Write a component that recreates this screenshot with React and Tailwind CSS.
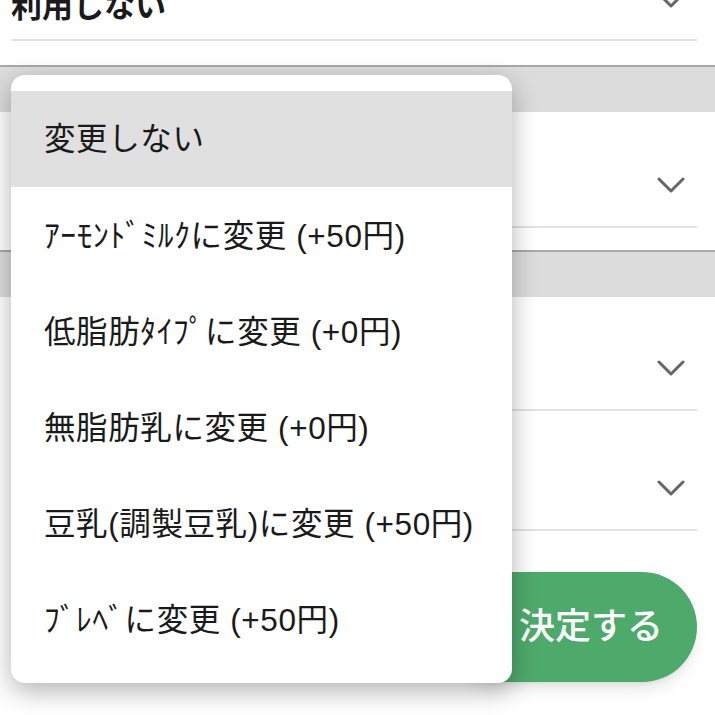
import React from 'react';

const FONT = { fontFamily: '"Liberation Sans", "Noto Sans CJK JP", sans-serif' };

function Chevron() {
  return (
    <svg width="28" height="16" viewBox="0 0 28 16" fill="none" stroke="#666666" strokeWidth="3" strokeLinecap="round" strokeLinejoin="round">
      <path d="M2 2l12 12 12-12" />
    </svg>
  );
}

// select row: line at the bottom, chevron sits low in the row
function SelectRow({ className = '' }) {
  return (
    <div className={`flex items-end justify-end border-b-2 border-[#e2e2e2] ${className}`}>
      <div className="mb-[33px] mr-[12px]">
        <Chevron />
      </div>
    </div>
  );
}

const options = [
  'ｱｰﾓﾝﾄﾞﾐﾙｸに変更 (+50円)',
  '低脂肪ﾀｲﾌﾟに変更 (+0円)',
  '無脂肪乳に変更 (+0円)',
  '豆乳(調製豆乳)に変更 (+50円)',
  'ﾌﾞﾚﾍﾞに変更 (+50円)',
];

export default function App() {
  return (
    <div className="relative w-[715px] h-[715px] overflow-hidden bg-white text-[#1a1a1a]" style={FONT}>
      {/* section scrolled partially off the top */}
      <div className="flex h-[65px] flex-col pl-[11px] pr-[18px]">
        <div className="-mt-[40px] flex h-[81px] shrink-0 items-center justify-between border-b-2 border-[#e2e2e2]">
          <span className="mt-[14px] text-[31px] font-bold leading-none">利用しない</span>
          <div className="mr-[12px]">
            <Chevron />
          </div>
        </div>
      </div>

      <div className="h-[47px] border-t-2 border-[#a8a8a8] bg-[#dcdcdc]" />

      <div className="h-[138px] pl-[11px] pr-[18px]">
        <SelectRow className="h-[116px]" />
      </div>

      <div className="h-[47px] border-t-2 border-[#a8a8a8] bg-[#dcdcdc]" />

      <div className="pl-[11px] pr-[18px]">
        <SelectRow className="h-[114px]" />
        <SelectRow className="h-[120px]" />
      </div>

      {/* bottom buttons */}
      <div className="mt-[41px] flex justify-end gap-4 pl-[11px] pr-[18px]">
        <button className="h-[110px] w-[250px] rounded-full bg-[#ececec]" />
        <button className="h-[110px] w-[250px] rounded-full bg-[#4eaa6b] pl-[38px] text-[36px] font-medium text-white shadow-lg">
          決定する
        </button>
      </div>

      {/* native select popup */}
      <div className="absolute left-[11px] top-[75px] w-[501px] rounded-[14px] bg-white py-[16px] shadow-[0_8px_26px_rgba(0,0,0,0.3)]">
        <div className="flex h-[96px] items-center bg-[#e0e0e0] px-[33px] pt-[2px] text-[31.5px] leading-none tracking-[0.6px]">
          変更しない
        </div>
        {options.map((o) => (
          <div key={o} className="flex h-[96px] items-center px-[33px] pt-[4px] text-[31.5px] leading-none tracking-[0.6px]">
            {o}
          </div>
        ))}
      </div>
    </div>
  );
}
